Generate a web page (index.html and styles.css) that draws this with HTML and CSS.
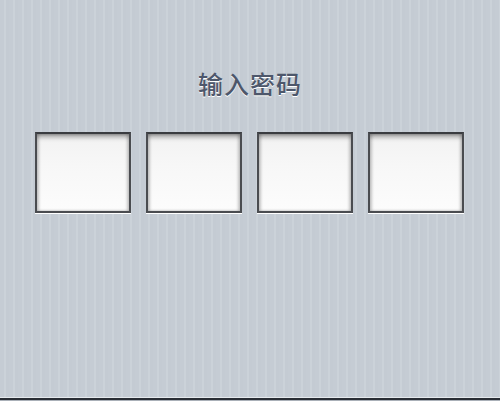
FILE: index.html
```html
<!DOCTYPE html>
<html lang="zh">
<head>
<meta charset="utf-8">
<link rel="stylesheet" href="styles.css">
</head>
<body>
<div class="screen">
  <h1 class="title">输入密码</h1>
  <div class="boxes">
    <div class="box"></div>
    <div class="box"></div>
    <div class="box"></div>
    <div class="box"></div>
  </div>
  <div class="bottom"></div>
</div>
</body>
</html>
```
FILE: styles.css
```css
html, body {
  margin: 0;
  padding: 0;
}
body {
  width: 500px;
  height: 401px;
  overflow: hidden;
}
.screen {
  width: 500px;
  height: 401px;
  display: flex;
  flex-direction: column;
  background-color: #c6cdd5;
  background-image: repeating-linear-gradient(90deg,
    #c5ccd4 0px, #c5ccd4 4px,
    #cbd2d9 4px, #cbd2d9 6px,
    #c4cbd3 6px, #c4cbd3 9px);
}
.title {
  margin: 68px 0 0 0;
  text-align: center;
  font-family: "Noto Sans CJK SC", "Noto Sans", sans-serif;
  font-size: 25px;
  font-weight: 500;
  line-height: 30px;
  color: #4d576b;
  text-shadow: 0 1px 0 #ffffff;
  letter-spacing: 1px;
}
.boxes {
  display: flex;
  gap: 15px;
  margin-top: 34px;
  padding-left: 35px;
}
.box {
  box-sizing: border-box;
  width: 96px;
  height: 81px;
  border: 2px solid #4a4c50;
  border-top-color: #3a3c40;
  background: linear-gradient(180deg, #f2f2f2 0%, #f7f7f7 40%, #fcfcfc 100%);
  box-shadow: inset 0 5px 5px -2px rgba(0,0,0,0.35), inset 2px 0 3px rgba(0,0,0,0.18), inset -2px 0 3px rgba(0,0,0,0.18), 0 1px 0 #ffffff;
}
.bottom {
  margin-top: auto;
  height: 2px;
  border-top: 1px solid #e6eaee;
  background: #2a2e35;
  border-bottom: 1px solid #aab0b8;
}
```
